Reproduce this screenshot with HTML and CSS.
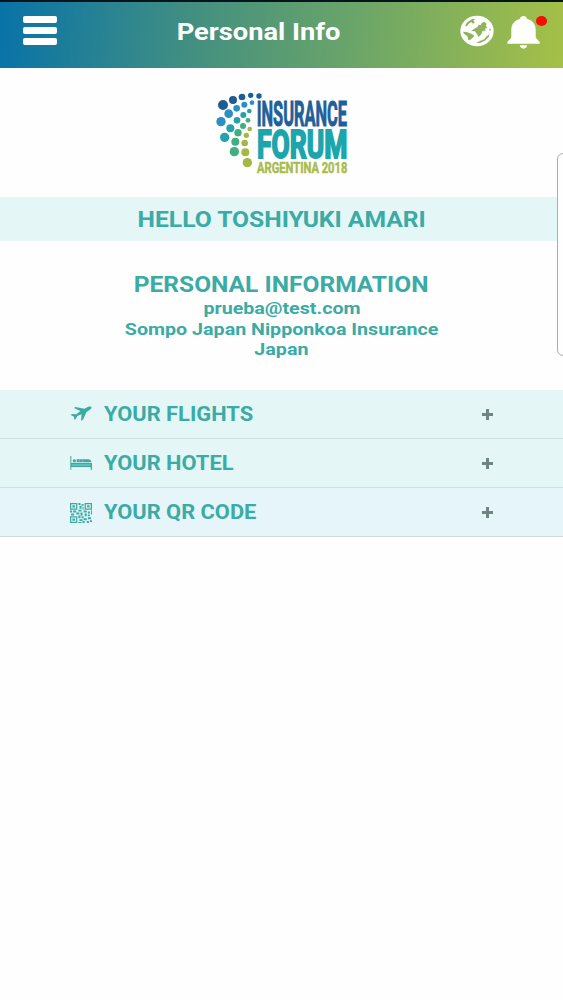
FILE: index.html
```html
<!DOCTYPE html>
<html lang="en">
<head>
<meta charset="utf-8">
<title>Personal Info</title>
<link rel="stylesheet" href="styles.css">
</head>
<body>
<header class="topbar">
  <div class="menu"><i class="bar"></i><i class="bar"></i><i class="bar"></i></div>
  <h1 class="title"><span class="wide">Personal Info</span></h1>
  <div class="actions">
    <svg class="globe" viewBox="0 0 102 94">
      <ellipse cx="51" cy="47" rx="50" ry="45.500" fill="#fff"/>
      <g class="land">
        <path d="M15 32 L20 23 L30 15 L38 11 L46 12 L40 17 L45 21 L39 25 L33 20 L26 26 L20 33 Z"/>
        <path d="M9 49 L20 50 L36 56 L43 61 L37 68 L29 75 L25 73 L22 63 L12 55 Z"/>
        <path d="M66 22 L73 19 L80 26 L77 31 L82 37 L75 40 L77 46 L68 47 L64 57 L56 65 L52 58 L45 48 L34 47 L43 40 L53 34 L56 28 L62 29 Z"/>
        <path d="M80 63 L89 56 L86 65 L77 75 L62 82 L48 83 L59 77 L73 72 Z"/>
        <circle cx="90" cy="43" r="2.500"/>
      </g>
    </svg>
    <div class="bell-wrap">
      <svg class="bell" viewBox="0 0 100 100">
        <path fill="#fff" d="M50 0 C56 0 60 3 60 8 C77 13 87 24 87 42 V64 C88 71 99 76 99 80 V84 H1 V80 C1 76 12 71 13 64 V42 C13 24 23 13 40 8 C40 3 44 0 50 0 Z M39 89 H61 C60 96 56 99 50 99 C44 99 40 96 39 89 Z"/>
      </svg>
      <i class="dot"></i>
    </div>
  </div>
</header>
<main>
  <section class="brand">
    <svg class="logo" viewBox="0 0 465 315">
      <g fill="#1e5c94"><circle cx="54" cy="75" r="15"/><circle cx="84" cy="60" r="12"/><circle cx="111" cy="51" r="10"/><circle cx="137" cy="46" r="8"/><circle cx="162" cy="48" r="8"/></g>
      <g fill="#2c8fc4"><circle cx="48" cy="125" r="14"/><circle cx="71" cy="101" r="13"/><circle cx="95" cy="85" r="10"/><circle cx="118" cy="74" r="9"/><circle cx="141" cy="68" r="7"/></g>
      <g fill="#20a3ad"><circle cx="59" cy="172" r="14"/><circle cx="76" cy="145" r="12"/><circle cx="96" cy="121" r="10"/><circle cx="115" cy="105" r="9"/><circle cx="133" cy="93" r="7"/></g>
      <g fill="#3fae80"><circle cx="88" cy="215" r="14"/><circle cx="91" cy="185" r="12"/><circle cx="99" cy="158" r="11"/><circle cx="114" cy="138" r="9"/><circle cx="129" cy="121" r="7"/></g>
      <g fill="#a4b845"><circle cx="127" cy="248" r="14"/><circle cx="121" cy="217" r="12"/><circle cx="119" cy="189" r="10"/><circle cx="124" cy="166" r="8"/><circle cx="134" cy="147" r="7"/></g>
      <text class="lt insurance" x="155" y="139" font-size="104" textLength="271" lengthAdjust="spacingAndGlyphs">INSURANCE</text>
      <text class="lt forum" x="156" y="235" font-size="115" textLength="271" lengthAdjust="spacingAndGlyphs">FORUM</text>
      <text class="lt argentina" x="156" y="279" font-size="44" textLength="271" lengthAdjust="spacingAndGlyphs">ARGENTINA 2018</text>
    </svg>
  </section>
  <h2 class="hello"><span class="wide">HELLO TOSHIYUKI AMARI</span></h2>
  <section class="info">
    <h2 class="info-title"><span class="wide">PERSONAL INFORMATION</span></h2>
    <p class="line"><span class="wide">prueba@test.com</span></p>
    <p class="line"><span class="wide">Sompo Japan Nipponkoa Insurance</span></p>
    <p class="line"><span class="wide">Japan</span></p>
  </section>
  <ul class="list">
    <li class="row">
      <svg class="icon" viewBox="0 0 66 60"><path d="M64 9 C61 6 55 8 49 11 L43 14 L16 9 L12 12 L31 21 L19 31 L6 30 L2 33 L12 38 L13 47 L17 45 L22 36 L35 31 L33 50 L39 47 L49 25 L57 19 C62 16 66 12 64 9 Z"/></svg>
      <span class="label wide">YOUR FLIGHTS</span><span class="plus"></span>
    </li>
    <li class="row">
      <svg class="icon" viewBox="0 0 66 60"><path d="M1 9 H4 V30 H66 V50 H62 V42 H4 V50 H1 Z M8 23 a5 4.500 0 0 1 10 0 a5 4.500 0 0 1 -10 0 Z M20 19 H54 C60 19 64 22 64 28 H8 V27 H20 Z"/><path class="slit" d="M5 36 H62 M28 22 V26 M38 22 V26"/></svg>
      <span class="label wide">YOUR HOTEL</span><span class="plus"></span>
    </li>
    <li class="row last">
      <svg class="icon qr" viewBox="0 0 21 21" preserveAspectRatio="none"><path fill-rule="evenodd" d="M0 0h7v7H0zM1.200 1.200v4.600h4.600V1.200zM14 0h7v7h-7zM15.200 1.200v4.600h4.600V1.200zM0 14h7v7H0zM1.200 15.200v4.600h4.600v-4.600zM2.300 2.300h2.400v2.400H2.300zM16.300 2.300h2.400v2.400h-2.400zM2.300 16.300h2.400v2.400H2.300zM8 0h2v2H8zM11 1h2v2h-2zM9 3h2v3H9zM12 4h1v3h-1zM8 7h3v2H8zM0 8h2v2H0zM3 8h3v2H3zM6 10h3v2H6zM1 11h3v2H1zM10 10h2v3h-2zM13 8h3v2h-3zM17 9h2v2h-2zM20 8h1v4h-1zM14 11h2v3h-2zM17 12h2v2h-2zM8 13h2v3H8zM11 14h2v2h-2zM13 16h3v2h-3zM17 15h3v2h-3zM9 17h3v2H9zM8 20h3v1H8zM12 19h2v2h-2zM16 19h2v2h-2zM19 18h2v2h-2z"/></svg>
      <span class="label wide">YOUR QR CODE</span><span class="plus"></span>
    </li>
  </ul>
</main>
<div class="edge-panel"></div>
</body>
</html>
```
FILE: styles.css
```css
* { box-sizing: border-box; }
body { margin: 0; background: #fefefe; color: #3aaba5; font-family: Roboto, sans-serif; overflow: hidden; }
h1, h2, p, ul { margin: 0; padding: 0; }
main { display: block; }
.wide { display: inline-block; white-space: nowrap; font-weight: 700; transform: scaleX(1.12); }
.topbar { height: 68px; border-top: 2px solid #06151c; background: linear-gradient(95deg, #0873a8 0%, #45917f 36%, #6ba568 63%, #a5c047 100%); display: grid; grid-template-columns: 120px 1fr 120px; padding: 12px 0 0; }
.menu { display: flex; flex-direction: column; gap: 4px; padding: 2px 0 0 23px; }
.bar { width: 34px; height: 7px; border-radius: 2px; background: #fff; }
.title { color: #fff; font-size: 23.500px; line-height: 34px; padding-top: 1px; text-align: center; padding-right: 45px; }
.title .wide { transform: scaleX(1.16); }
.actions { display: flex; gap: 13px; padding-left: 17px; }
.globe { width: 34px; height: 32px; margin-top: 1px; }
.land { fill: #8fb45c; }
.bell-wrap { position: relative; width: 34px; height: 34px; }
.bell { width: 33px; height: 33px; margin-top: 2px; }
.dot { position: absolute; left: 29px; top: 2px; width: 11px; height: 10px; border-radius: 50%; background: #f80c04; }
.brand { height: 129px; padding: 12px 0 0 205px; }
.logo { display: block; width: 155px; height: 105px; overflow: visible; }
.lt { font-family: Roboto, sans-serif; font-weight: 700; stroke-width: 3; }
.insurance { fill: #205f98; stroke: #205f98; }
.forum { fill: #1ba5ac; stroke: #1ba5ac; stroke-width: 6; }
.argentina { fill: #a9bb4c; stroke: #a9bb4c; stroke-width: 1.5; }
.hello { height: 44px; background: #e5f6f6; font-size: 22px; line-height: 45px; text-align: center; }
.info { height: 149px; padding-top: 31px; text-align: center; }
.info-title { font-size: 21.500px; line-height: 25px; }
.info-title .wide { transform: scaleX(1.142); }
.line { font-size: 17px; line-height: 20.500px; position: relative; top: 1px; }
.line .wide { transform: scaleX(1.156); }
.list { list-style: none; }
.row { height: 49px; display: flex; align-items: center; padding-left: 70px; background: #e5f6f6; border-bottom: 1px solid #d2dfdf; }
.last { background: #e5f5fa; border-color: #d0d8da; }
.icon { width: 22px; height: 20px; fill: #3aaba0; }
.qr { margin-top: 2px; }
.slit { fill: none; stroke: #e5f6f6; stroke-width: 1.5; }
.label { font-size: 19.500px; margin-left: 12px; transform-origin: left; width: 364px; }
.plus { width: 11px; height: 11px; margin-left: 14px; background: linear-gradient(#6f8582, #6f8582) center / 11px 3px no-repeat, linear-gradient(#6f8582, #6f8582) center / 3px 11px no-repeat; }
.edge-panel { position: absolute; right: -12px; top: 153px; width: 18px; height: 203px; border: 1px solid #adadad; border-radius: 6px; background: #fefefe; }
```
